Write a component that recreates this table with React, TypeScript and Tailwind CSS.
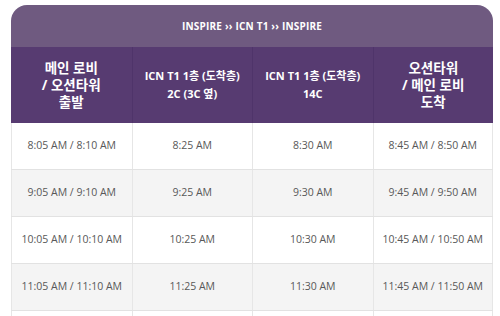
const rows = [
  ["8:05 AM / 8:10 AM", "8:25 AM", "8:30 AM", "8:45 AM / 8:50 AM"],
  ["9:05 AM / 9:10 AM", "9:25 AM", "9:30 AM", "9:45 AM / 9:50 AM"],
  ["10:05 AM / 10:10 AM", "10:25 AM", "10:30 AM", "10:45 AM / 10:50 AM"],
  ["11:05 AM / 11:10 AM", "11:25 AM", "11:30 AM", "11:45 AM / 11:50 AM"],
  ["", "", "", ""],
];

const headers = [
  ["메인 로비", "/ 오션타워", "출발"],
  ["ICN T1 1층 (도착층)", "2C (3C 옆)"],
  ["ICN T1 1층 (도착층)", "14C"],
  ["오션타워", "/ 메인 로비", "도착"],
];

export default function App() {
  return (
    <div
      className="w-[500px] h-[316px] overflow-hidden bg-white pt-[5px] pl-[11px]"
      style={{ fontFamily: '"Open Sans", "Noto Sans CJK KR", sans-serif' }}
    >
      <div className="w-[482px] rounded-t-[16px] overflow-hidden">
        <div className="h-[42px] bg-[#6f5a80] flex items-center justify-center text-white text-[10px] font-bold tracking-[0.2px]">
          INSPIRE ›› ICN T1 ›› INSPIRE
        </div>
        <div className="grid grid-cols-4 bg-[#573b71] h-[76px]">
          {headers.map((lines, i) => (
            <div
              key={i}
              className={`flex flex-col items-center justify-center text-white font-bold ${
                lines.length === 3
                  ? "text-[13.5px] leading-[17px]"
                  : "text-[11px] leading-[18px]"
              } ${i > 0 ? "border-l border-[#4f346a]" : ""}`}
            >
              {lines.map((l) => (
                <div key={l}>{l}</div>
              ))}
            </div>
          ))}
        </div>
        {rows.map((row, r) => (
          <div
            key={r}
            className={`grid grid-cols-4 h-[47px] border-b border-[#e2e2e2] ${
              r % 2 === 1 ? "bg-[#f4f4f4]" : "bg-white"
            }`}
          >
            {row.map((cell, c) => (
              <div
                key={c}
                className={`flex items-center justify-center text-[10.5px] text-[#585858] border-l border-[#e6e6e6] ${
                  c === 3 ? "border-r" : ""
                }`}
              >
                {cell}
              </div>
            ))}
          </div>
        ))}
      </div>
    </div>
  );
}
